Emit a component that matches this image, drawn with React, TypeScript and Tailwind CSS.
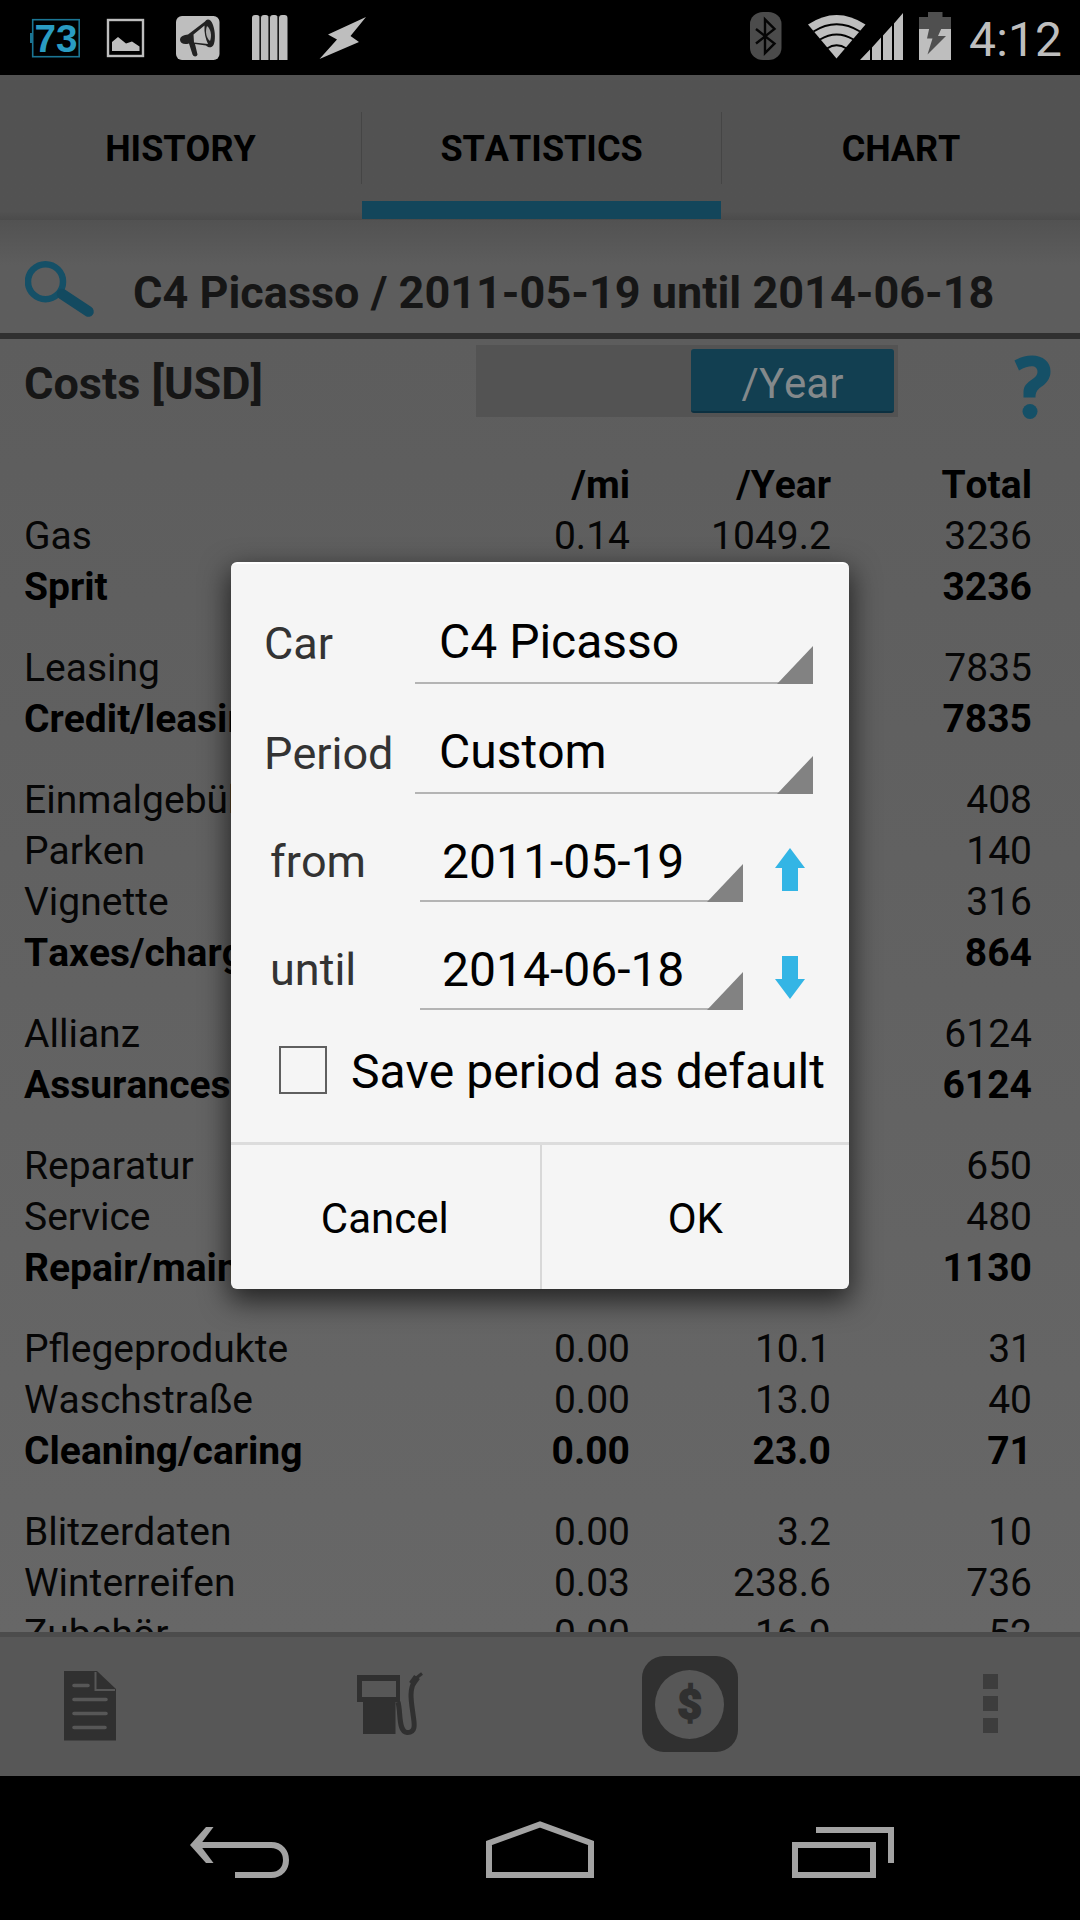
import { ReactNode } from "react"

type Row = { label: string; mi?: string; year?: string; total: string; sum?: boolean }

const groups: Row[][] = [
  [
    { label: "Gas", mi: "0.14", year: "1049.2", total: "3236" },
    { label: "Sprit", total: "3236", sum: true },
  ],
  [
    { label: "Leasing", total: "7835" },
    { label: "Credit/leasing", total: "7835", sum: true },
  ],
  [
    { label: "Einmalgebühr", total: "408" },
    { label: "Parken", total: "140" },
    { label: "Vignette", total: "316" },
    { label: "Taxes/charges", total: "864", sum: true },
  ],
  [
    { label: "Allianz", total: "6124" },
    { label: "Assurances", total: "6124", sum: true },
  ],
  [
    { label: "Reparatur", total: "650" },
    { label: "Service", total: "480" },
    { label: "Repair/maint.", total: "1130", sum: true },
  ],
  [
    { label: "Pflegeprodukte", mi: "0.00", year: "10.1", total: "31" },
    { label: "Waschstraße", mi: "0.00", year: "13.0", total: "40" },
    { label: "Cleaning/caring", mi: "0.00", year: "23.0", total: "71", sum: true },
  ],
  [
    { label: "Blitzerdaten", mi: "0.00", year: "3.2", total: "10" },
    { label: "Winterreifen", mi: "0.03", year: "238.6", total: "736" },
    { label: "Zubehör", mi: "0.00", year: "16.9", total: "52" },
  ],
]

export default function App() {
  return (
    <div className="relative flex h-[1920px] w-[1080px] flex-col overflow-hidden bg-black font-['Roboto',sans-serif] [font-kerning:none]">
      <StatusBar />
      <Tabs />
      <SearchRow />
      <main className="flex h-[1293px] flex-col overflow-hidden bg-linear-to-b from-[#5d5d5d] to-[#676767]">
        <CostsHeader />
        <CostsTable />
      </main>
      <BottomBar />
      <NavBar />
      <FilterDialog />
    </div>
  )
}

function StatusBar() {
  return (
    <header className="flex h-[75px] shrink-0 justify-between bg-black">
      <svg width="400" height="75" viewBox="0 0 400 75">
        <rect x="32.7" y="19.7" width="46.5" height="37" fill="none" stroke="#1b7593" strokeWidth="1.6" />
        <rect x="30" y="33" width="2.5" height="10" fill="#1b7593" />
        <text x="34.5" y="52" fontSize="39" fontWeight="700" textLength="43" lengthAdjust="spacingAndGlyphs" fill="#2a9cc2" fontFamily="Liberation Sans, sans-serif">73</text>
        <rect x="108" y="20" width="35" height="36" fill="none" stroke="#bebebe" strokeWidth="2.4" />
        <path d="M112 51V42l6-5 8 6.500 6-2 7.500 5V51z" fill="#bebebe" />
        <rect x="176" y="16" width="43.500" height="44" rx="6" fill="#bebebe" />
        <path d="M180 40C180 36 184 35 188 34.500L205 21.500C207 18 211 19 213 25 215.500 32 215.500 41 213.500 45 211.500 48.500 208 47.500 206 45.500L195 44 197.500 54.500C197 57 193.500 57 192.500 54.500L189 43.500C184 45 180.500 43.500 180 40z" fill="#222" />
        <path d="M193.500 34.500l11-9c-.5 7 1 13.500 3.500 18.500L194 42.500z" fill="#bebebe" />
        <path d="M207 26c4 3 5 10 3 15-4-3-5-10-3-15z" fill="#aaa" />
        <path d="M252 60V18q0-3 3-3h2q2.500 0 2.500 3v42zM261 60V18q0-3 3-3h2q2.500 0 2.500 3v42zM270 60V18q0-3 3-3h2q2.500 0 2.500 3v42zM279 60V18q0-3 3-3h2.500q3 0 3 3v42z" fill="#bebebe" />
        <path d="M259.800 16v44M268.800 16v44M277.800 16v44" stroke="#555" strokeWidth="1" />
        <path d="M366 17L328 34.500l9 5L319.500 59 359 42l-8.500-6z" fill="#bebebe" />
      </svg>
      <svg width="360" height="75" viewBox="720 0 360 75">
        <rect x="750" y="12" width="31.500" height="48" rx="13" ry="12" fill="#4b4b4b" />
        <path d="M756 29l18.500 14.500L765 53V19.500l9.500 9.500L756 43.500" fill="none" stroke="#050505" strokeWidth="2.400" />
        <path d="M808 24.500Q836.500 5.500 865.500 24.500L836.500 58.500z" fill="#bebebe" />
        <path d="M813.500 31.500Q836.500 17 860 31.500M820 39.500Q836.500 29.500 853.500 39.500M827 48.500Q836.500 42 846.500 48.500" fill="none" stroke="#000" strokeWidth="2" />
        <path d="M860 60L870 49.500V60zM872 60V47.500L881 37.500V60zM883 60V35.500L892 25.500V60zM894 60V23.500L903 13V60z" fill="#bebebe" />
        <path d="M919 29V17h9v-5h14.500v5H951v12z" fill="#4f4f4f" />
        <rect x="919" y="29" width="32" height="31" fill="#bebebe" />
        <path d="M930 25h13l-5 11h8L927.500 54.500l5-16H927z" fill="#4f4f4f" />
        <text x="969" y="56" fontSize="48" fill="#bebebe" textLength="93" fontFamily="Roboto, sans-serif">4:12</text>
      </svg>
    </header>
  )
}

function Tabs() {
  return (
    <nav className="grid h-[145px] shrink-0 grid-cols-[361px_1px_359px_1px_358px] bg-linear-to-b from-[#525252] from-94% to-[#4b4b4b] text-4xl font-bold text-black">
      <Tab label="HISTORY" />
      <div className="mt-[37px] h-[72px] bg-[#454545]" />
      <Tab label="STATISTICS" active />
      <div className="mt-[37px] h-[72px] bg-[#454545]" />
      <Tab label="CHART" />
    </nav>
  )
}

function Tab({ label, active = false }: { label: string; active?: boolean }) {
  return (
    <div className="flex flex-col">
      <div className="flex h-[126px] items-center justify-center pt-[21px] leading-none">{label}</div>
      {active && <div className="h-[18px] bg-[#13465b]" />}
    </div>
  )
}

function SearchRow() {
  return (
    <div className="flex h-[119px] shrink-0 items-center border-b-[6px] border-[#303030] bg-linear-to-b from-[#525252] to-[#5d5d5d] to-40% pl-[25px]">
      <svg width="72" height="60" viewBox="25 260 72 60" className="mt-[25px] shrink-0">
        <circle cx="45.500" cy="282.700" r="17.500" fill="none" stroke="#155067" strokeWidth="6.500" />
        <path d="M62 295L88.500 312.500" stroke="#134a60" strokeWidth="10.500" strokeLinecap="round" />
      </svg>
      <span className="ml-9 mt-8 whitespace-nowrap text-[45px] font-bold leading-none text-[#161616]">
        C4 Picasso / 2011-05-19 until 2014-06-18
      </span>
    </div>
  )
}

function CostsHeader() {
  return (
    <div className="flex h-[121px] shrink-0 items-start">
      <div className="w-[452px] pl-6 pt-[22px] text-[45px] font-bold leading-none text-[#161616]">Costs [USD]</div>
      <div className="ml-6 mt-1.5 flex h-[72px] w-[422px] justify-end bg-[#535353] pr-1 pt-1">
        <div className="flex h-[64px] w-[203px] items-center justify-center rounded-[3px] border-b-2 border-[#0c3040] bg-[#123f51] pt-1.5 text-[42px] text-[#84898b]">
          /Year
        </div>
      </div>
      <svg width="40" height="68" viewBox="0 0 40 68" className="ml-[115px] mt-[15px]">
        <path d="M1.500 6.500C8 3 13 1.500 19 1.500 30 1.500 37.500 8 37.500 17.500 37.500 25 33 29.500 28 33 24 36 22.500 38.500 22.500 43.500H10.500V38C10.500 32 14 29 19 25.500 22.500 23 24.500 21 24.500 18 24.500 11 17 10.500 6 16.500z" fill="#155067" />
        <circle cx="17" cy="57.500" r="7.500" fill="#155067" />
      </svg>
    </div>
  )
}

function CostsTable() {
  return (
    <div className="flex flex-col gap-[30px] text-[39px] leading-[51px] text-[#060606]">
      {groups.map((rows, i) => (
        <div key={i}>
          {i === 0 && <TableRow label="" mi="/mi" year="/Year" total="Total" sum />}
          {rows.map((row) => (
            <TableRow key={row.label} {...row} />
          ))}
        </div>
      ))}
    </div>
  )
}

function TableRow({ label, mi, year, total, sum }: Row) {
  return (
    <div className={`grid h-[51px] grid-cols-[406px_200px_201px_201px] whitespace-nowrap pl-6 ${sum ? "font-bold text-black" : ""}`}>
      <span>{label}</span>
      <span className="text-right">{mi}</span>
      <span className="text-right">{year}</span>
      <span className="text-right">{total}</span>
    </div>
  )
}

function BottomBar() {
  return (
    <footer className="flex h-36 shrink-0 items-start justify-between border-t-[5px] border-[#4c4c4c] bg-[#575757] pl-16 pr-[82px]">
      <svg width="52" height="70" viewBox="0 0 52 70" className="mt-[34px]">
        <path d="M0 0H33L52 18V69.500H0z" fill="#303030" />
        <path d="M31.500 1V19H51" fill="none" stroke="#575757" strokeWidth="2" />
        <path d="M10 14.500H24M10 28.500H42M10 42.500H42M10 56.500H41" stroke="#575757" strokeWidth="3.600" strokeLinecap="round" />
      </svg>
      <svg width="68" height="64" viewBox="0 0 68 64" className="ml-[106px] mt-[35px]">
        <path d="M0 3H43V30H38.500V62H6V30H0zM5 9V25H39V9z" fill="#303030" fillRule="evenodd" />
        <path d="M41 30C44 40 41 60 50 60.500 60 61 57 50 56 42 54 28 52 18 58 8" fill="none" stroke="#303030" strokeWidth="5" />
        <path d="M55 12L60 5" stroke="#303030" strokeWidth="7" />
        <path d="M58 7L65 1.500" stroke="#303030" strokeWidth="3" />
      </svg>
      <div className="ml-[81px] mt-[19px] flex h-24 w-24 items-center justify-center rounded-[22px] bg-[#303030]">
        <div className="flex h-[69px] w-[69px] items-center justify-center rounded-full bg-[#575757] text-[43px] font-black leading-none text-[#303030] [-webkit-text-stroke:1.5px_#303030]">
          $
        </div>
      </div>
      <div className="ml-[110px] mt-[37px] flex flex-col gap-[7px]">
        <div className="h-[15px] w-[15px] bg-[#3d3d3d]" />
        <div className="h-[15px] w-[15px] bg-[#3d3d3d]" />
        <div className="h-[15px] w-[15px] bg-[#3d3d3d]" />
      </div>
    </footer>
  )
}

function NavBar() {
  return (
    <div className="flex h-36 shrink-0 items-start bg-black pl-[190px] pt-[45px]">
      <svg width="100" height="58" viewBox="190 1821 100 58" fill="none" stroke="#a3a3a3" strokeWidth="6">
        <path d="M196 1845H271C281 1845 286 1852 286 1860S281 1875 271 1875H235" />
        <path d="M206 1827H213.500L200 1845 213.500 1863H206L190 1845z" fill="#a3a3a3" stroke="none" />
      </svg>
      <svg width="108" height="58" viewBox="486 1821 108 58" fill="none" stroke="#a3a3a3" strokeWidth="6" className="ml-[196px]">
        <path d="M489 1875V1843L540 1824.500 591 1843V1875z" />
      </svg>
      <svg width="102" height="58" viewBox="792 1821 102 58" fill="none" stroke="#a3a3a3" strokeWidth="6" className="ml-[198px]">
        <path d="M795 1845H873V1875H795zM816 1830H891V1863" />
      </svg>
    </div>
  )
}

function FilterDialog() {
  return (
    <div className="absolute left-[231px] top-[562px] flex h-[727px] w-[618px] flex-col rounded-md border-t-2 border-white bg-[#f5f5f5] pt-[34px] shadow-[0_10px_28px_2px_rgba(0,0,0,0.65)]">
      <div className="flex h-[110px] pl-[33px]">
        <Label text="Car" />
        <Spinner value="C4 Picasso" className="ml-[151px] w-[398px] pl-6" />
      </div>
      <div className="flex h-[108px] pl-[33px]">
        <Label text="Period" />
        <Spinner value="Custom" className="ml-[151px] w-[398px] pl-6" />
      </div>
      <div className="flex h-[108px] pl-[39px]">
        <Label text="from" />
        <Spinner value="2011-05-19" className="ml-[150px] w-[323px] pl-[22px] pb-0 [&>span]:h-[77px]" />
        <Arrow />
      </div>
      <div className="flex h-[108px] pl-[39px]">
        <Label text="until" />
        <Spinner value="2014-06-18" className="ml-[150px] w-[323px] pl-[22px] [&>span]:h-[77px]" />
        <Arrow className="rotate-180" />
      </div>
      <div className="flex h-[110px] items-start pl-12 pt-3.5">
        <div className="h-12 w-12 border-2 border-[#5f5f5f]" />
        <span className="ml-6 mt-0.5 whitespace-nowrap text-5xl leading-none text-black">Save period as default</span>
      </div>
      <div className="flex flex-1 border-t-[3px] border-[#dcdcdc] text-[42px] text-black">
        <Action>Cancel</Action>
        <div className="ml-px w-0.5 bg-[#d8d8d8]" />
        <Action>OK</Action>
      </div>
    </div>
  )
}

function Label({ text }: { text: string }) {
  return <span className="flex h-[91px] w-0 items-center whitespace-nowrap text-[45px] text-[#333]">{text}</span>
}

function Spinner({ value, className }: { value: string; className: string }) {
  return (
    <div className={`flex h-[86px] shrink-0 items-end justify-between border-b-2 border-[#b4b4b4] ${className}`}>
      <span className="flex h-20 items-center whitespace-nowrap text-5xl leading-none text-black">{value}</span>
      <svg width="36" height="38" viewBox="0 0 36 38" className="-mb-0.5 shrink-0">
        <path d="M36 0V38H0z" fill="#828282" />
      </svg>
    </div>
  )
}

function Arrow({ className = "" }: { className?: string }) {
  return (
    <svg width="30" height="43" viewBox="0 0 30 43" className={`ml-8 mt-8 ${className}`}>
      <path d="M15 0L30 20H23V43H7V20H0z" fill="#33b5e5" />
    </svg>
  )
}

function Action({ children }: { children: ReactNode }) {
  return <button className="flex-1 pt-0.5">{children}</button>
}
